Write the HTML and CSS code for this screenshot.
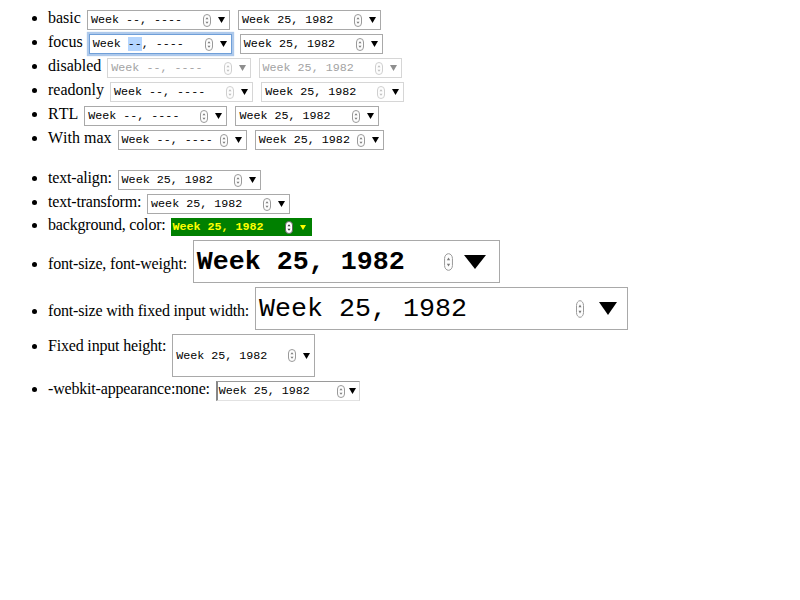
FILE: index.html
```html
<!DOCTYPE html>
<html>
<head>
<meta charset="utf-8">
<link rel="stylesheet" href="styles.css">
</head>
<body>
<ul class="list">
  <li>basic <span class="inp"><span class="txt">Week --, ----</span><svg class="spin" viewBox="0 0 8 13" preserveAspectRatio="none"><rect x="0.5" y="0.5" width="7" height="12" rx="3.5"/><path d="M2.5 5.2 L4 3.2 L5.5 5.2Z M2.5 7.8 L4 9.8 L5.5 7.8Z"/></svg><svg class="arr" viewBox="0 0 7 6" preserveAspectRatio="none"><path d="M0 0H7L3.5 6Z"/></svg></span> <span class="inp"><span class="txt">Week 25, 1982</span><svg class="spin" viewBox="0 0 8 13" preserveAspectRatio="none"><rect x="0.5" y="0.5" width="7" height="12" rx="3.5"/><path d="M2.5 5.2 L4 3.2 L5.5 5.2Z M2.5 7.8 L4 9.8 L5.5 7.8Z"/></svg><svg class="arr" viewBox="0 0 7 6" preserveAspectRatio="none"><path d="M0 0H7L3.5 6Z"/></svg></span></li>
  <li>focus <span class="inp focus"><span class="txt">Week <span class="sel">--</span>, ----</span><svg class="spin" viewBox="0 0 8 13" preserveAspectRatio="none"><rect x="0.5" y="0.5" width="7" height="12" rx="3.5"/><path d="M2.5 5.2 L4 3.2 L5.5 5.2Z M2.5 7.8 L4 9.8 L5.5 7.8Z"/></svg><svg class="arr" viewBox="0 0 7 6" preserveAspectRatio="none"><path d="M0 0H7L3.5 6Z"/></svg></span> <span class="inp"><span class="txt">Week 25, 1982</span><svg class="spin" viewBox="0 0 8 13" preserveAspectRatio="none"><rect x="0.5" y="0.5" width="7" height="12" rx="3.5"/><path d="M2.5 5.2 L4 3.2 L5.5 5.2Z M2.5 7.8 L4 9.8 L5.5 7.8Z"/></svg><svg class="arr" viewBox="0 0 7 6" preserveAspectRatio="none"><path d="M0 0H7L3.5 6Z"/></svg></span></li>
  <li>disabled <span class="inp dis"><span class="txt">Week --, ----</span><svg class="spin" viewBox="0 0 8 13" preserveAspectRatio="none"><rect x="0.5" y="0.5" width="7" height="12" rx="3.5"/><path d="M2.5 5.2 L4 3.2 L5.5 5.2Z M2.5 7.8 L4 9.8 L5.5 7.8Z"/></svg><svg class="arr" viewBox="0 0 7 6" preserveAspectRatio="none"><path d="M0 0H7L3.5 6Z"/></svg></span> <span class="inp dis"><span class="txt">Week 25, 1982</span><svg class="spin" viewBox="0 0 8 13" preserveAspectRatio="none"><rect x="0.5" y="0.5" width="7" height="12" rx="3.5"/><path d="M2.5 5.2 L4 3.2 L5.5 5.2Z M2.5 7.8 L4 9.8 L5.5 7.8Z"/></svg><svg class="arr" viewBox="0 0 7 6" preserveAspectRatio="none"><path d="M0 0H7L3.5 6Z"/></svg></span></li>
  <li>readonly <span class="inp ro"><span class="txt">Week --, ----</span><svg class="spin" viewBox="0 0 8 13" preserveAspectRatio="none"><rect x="0.5" y="0.5" width="7" height="12" rx="3.5"/><path d="M2.5 5.2 L4 3.2 L5.5 5.2Z M2.5 7.8 L4 9.8 L5.5 7.8Z"/></svg><svg class="arr" viewBox="0 0 7 6" preserveAspectRatio="none"><path d="M0 0H7L3.5 6Z"/></svg></span> <span class="inp ro"><span class="txt">Week 25, 1982</span><svg class="spin" viewBox="0 0 8 13" preserveAspectRatio="none"><rect x="0.5" y="0.5" width="7" height="12" rx="3.5"/><path d="M2.5 5.2 L4 3.2 L5.5 5.2Z M2.5 7.8 L4 9.8 L5.5 7.8Z"/></svg><svg class="arr" viewBox="0 0 7 6" preserveAspectRatio="none"><path d="M0 0H7L3.5 6Z"/></svg></span></li>
  <li>RTL <span class="inp"><span class="txt">Week --, ----</span><svg class="spin" viewBox="0 0 8 13" preserveAspectRatio="none"><rect x="0.5" y="0.5" width="7" height="12" rx="3.5"/><path d="M2.5 5.2 L4 3.2 L5.5 5.2Z M2.5 7.8 L4 9.8 L5.5 7.8Z"/></svg><svg class="arr" viewBox="0 0 7 6" preserveAspectRatio="none"><path d="M0 0H7L3.5 6Z"/></svg></span> <span class="inp"><span class="txt">Week 25, 1982</span><svg class="spin" viewBox="0 0 8 13" preserveAspectRatio="none"><rect x="0.5" y="0.5" width="7" height="12" rx="3.5"/><path d="M2.5 5.2 L4 3.2 L5.5 5.2Z M2.5 7.8 L4 9.8 L5.5 7.8Z"/></svg><svg class="arr" viewBox="0 0 7 6" preserveAspectRatio="none"><path d="M0 0H7L3.5 6Z"/></svg></span></li>
  <li>With max <span class="inp narrow"><span class="txt">Week --, ----</span><svg class="spin" viewBox="0 0 8 13" preserveAspectRatio="none"><rect x="0.5" y="0.5" width="7" height="12" rx="3.5"/><path d="M2.5 5.2 L4 3.2 L5.5 5.2Z M2.5 7.8 L4 9.8 L5.5 7.8Z"/></svg><svg class="arr" viewBox="0 0 7 6" preserveAspectRatio="none"><path d="M0 0H7L3.5 6Z"/></svg></span> <span class="inp narrow"><span class="txt">Week 25, 1982</span><svg class="spin" viewBox="0 0 8 13" preserveAspectRatio="none"><rect x="0.5" y="0.5" width="7" height="12" rx="3.5"/><path d="M2.5 5.2 L4 3.2 L5.5 5.2Z M2.5 7.8 L4 9.8 L5.5 7.8Z"/></svg><svg class="arr" viewBox="0 0 7 6" preserveAspectRatio="none"><path d="M0 0H7L3.5 6Z"/></svg></span></li>
</ul>
<ul class="list second">
  <li>text-align: <span class="inp"><span class="txt">Week 25, 1982</span><svg class="spin" viewBox="0 0 8 13" preserveAspectRatio="none"><rect x="0.5" y="0.5" width="7" height="12" rx="3.5"/><path d="M2.5 5.2 L4 3.2 L5.5 5.2Z M2.5 7.8 L4 9.8 L5.5 7.8Z"/></svg><svg class="arr" viewBox="0 0 7 6" preserveAspectRatio="none"><path d="M0 0H7L3.5 6Z"/></svg></span></li>
  <li>text-transform: <span class="inp"><span class="txt">week 25, 1982</span><svg class="spin" viewBox="0 0 8 13" preserveAspectRatio="none"><rect x="0.5" y="0.5" width="7" height="12" rx="3.5"/><path d="M2.5 5.2 L4 3.2 L5.5 5.2Z M2.5 7.8 L4 9.8 L5.5 7.8Z"/></svg><svg class="arr" viewBox="0 0 7 6" preserveAspectRatio="none"><path d="M0 0H7L3.5 6Z"/></svg></span></li>
  <li>background, color: <span class="inp green"><span class="txt">Week 25, 1982</span><svg class="spin" viewBox="0 0 8 13" preserveAspectRatio="none"><rect x="0.5" y="0.5" width="7" height="12" rx="3.5"/><path d="M2.5 5.2 L4 3.2 L5.5 5.2Z M2.5 7.8 L4 9.8 L5.5 7.8Z"/></svg><svg class="arr" viewBox="0 0 7 6" preserveAspectRatio="none"><path d="M0 0H7L3.5 6Z"/></svg></span></li>
  <li>font-size, font-weight: <span class="inp big bold"><span class="txt">Week 25, 1982</span><svg class="spin" viewBox="0 0 8 13" preserveAspectRatio="none"><rect x="0.5" y="0.5" width="7" height="12" rx="3.5"/><path d="M2.5 5.2 L4 3.2 L5.5 5.2Z M2.5 7.8 L4 9.8 L5.5 7.8Z"/></svg><svg class="arr" viewBox="0 0 7 6" preserveAspectRatio="none"><path d="M0 0H7L3.5 6Z"/></svg></span></li>
  <li>font-size with fixed input width: <span class="inp big fw"><span class="txt">Week 25, 1982</span><svg class="spin" viewBox="0 0 8 13" preserveAspectRatio="none"><rect x="0.5" y="0.5" width="7" height="12" rx="3.5"/><path d="M2.5 5.2 L4 3.2 L5.5 5.2Z M2.5 7.8 L4 9.8 L5.5 7.8Z"/></svg><svg class="arr" viewBox="0 0 7 6" preserveAspectRatio="none"><path d="M0 0H7L3.5 6Z"/></svg></span></li>
  <li>Fixed input height: <span class="inp fh"><span class="txt">Week 25, 1982</span><svg class="spin" viewBox="0 0 8 13" preserveAspectRatio="none"><rect x="0.5" y="0.5" width="7" height="12" rx="3.5"/><path d="M2.5 5.2 L4 3.2 L5.5 5.2Z M2.5 7.8 L4 9.8 L5.5 7.8Z"/></svg><svg class="arr" viewBox="0 0 7 6" preserveAspectRatio="none"><path d="M0 0H7L3.5 6Z"/></svg></span></li>
  <li>-webkit-appearance:none: <span class="inp app"><span class="txt">Week 25, 1982</span><svg class="spin" viewBox="0 0 8 13" preserveAspectRatio="none"><rect x="0.5" y="0.5" width="7" height="12" rx="3.5"/><path d="M2.5 5.2 L4 3.2 L5.5 5.2Z M2.5 7.8 L4 9.8 L5.5 7.8Z"/></svg><svg class="arr" viewBox="0 0 7 6" preserveAspectRatio="none"><path d="M0 0H7L3.5 6Z"/></svg></span></li>
</ul>
</body>
</html>
```

FILE: styles.css
```css
body {
  margin: 8px;
  font: 16px "Liberation Serif", "Times New Roman", serif;
  font-kerning: none;
  color: #000;
  background: #fff;
}

.list {
  margin: 0;
  padding-left: 40px;
  list-style: disc;
}

.second {
  margin-top: 16px;
  letter-spacing: -0.18px;
}

.inp {
  display: inline-flex;
  align-items: center;
  box-sizing: border-box;
  height: 20px;
  margin: 2px;
  padding: 0 4px 0 3px;
  border: 1px solid #a9a9a9;
  background: #fff;
  color: #000;
  font: 11.7px "Liberation Mono", "Courier New", monospace;
  letter-spacing: normal;
  vertical-align: baseline;
}

.txt {
  flex: none;
  width: 15ch;
  white-space: pre;
}

.narrow .txt {
  width: 13ch;
}

.spin {
  flex: none;
  width: 8px;
  height: 13px;
  margin-left: 7px;
}

.spin rect {
  fill: #fdfdfd;
  stroke: #9a9a9a;
  vector-effect: non-scaling-stroke;
}

.spin path {
  fill: #7a7a7a;
}

.arr {
  flex: none;
  width: 7px;
  height: 6px;
  margin-left: 7px;
  fill: currentColor;
}

.sel {
  background: #b4d5fe;
}

.focus {
  border-color: #6f9fd8;
  box-shadow: 0 0 1px 2px rgba(120, 165, 222, 0.6);
}

.dis,
.ro {
  border-color: #d6d6d6;
}

.dis {
  color: #a3a3a3;
}

.dis .spin rect,
.ro .spin rect {
  stroke: #cfcfcf;
}

.dis .spin path,
.ro .spin path {
  fill: #bdbdbd;
}

.dis .arr {
  fill: #8e8e8e;
}

.green {
  height: 18px;
  padding: 0 6px 0 1px;
  border: none;
  background: #008000;
  color: #ff0;
  font-weight: bold;
}

.green .spin rect {
  fill: #fff;
  stroke: #666;
}

.green .spin path {
  fill: #333;
}

.green .arr {
  width: 6px;
  height: 5px;
}

.big {
  height: 43px;
  padding: 0 13px 0 3px;
  font-size: 26.67px;
}

.bold {
  font-weight: bold;
}

.big .spin {
  width: 9px;
  height: 18px;
  margin-left: 7px;
}

.big .arr {
  width: 22px;
  height: 14px;
  margin-left: 11px;
}

.fw {
  width: 373px;
  padding-right: 10px;
}

.fw .spin {
  width: 8px;
  margin-left: auto;
}

.fw .arr {
  width: 18px;
  height: 13px;
  margin-left: 15px;
}

.fh {
  height: 43px;
  vertical-align: -8px;
}

.app {
  padding: 0 3px 0 1px;
  border-width: 1px 1px 1px 2px;
  border-color: #9a9a9a #d4d4d4 #e2e2e2 #878787;
}

.app .spin {
  margin-left: 13px;
}

.app .arr {
  margin-left: 4px;
}
```
